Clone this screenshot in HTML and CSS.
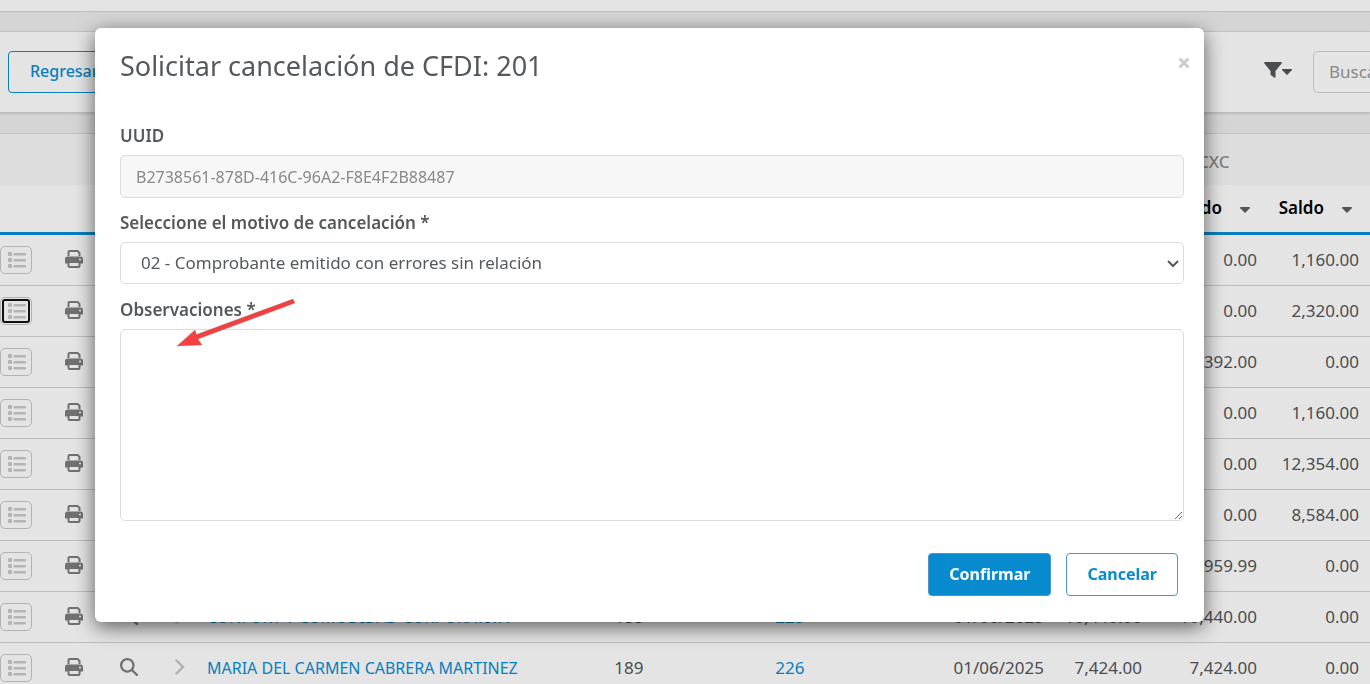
FILE: index.html
```html
<!DOCTYPE html>
<html lang="es">
<head>
<meta charset="utf-8">
<title>Solicitar cancelación de CFDI</title>
<link rel="stylesheet" href="styles.css">
</head>
<body>
<svg class="sprite" aria-hidden="true">
  <symbol id="i-list" viewBox="0 0 18 16"><g fill="currentColor"><rect width="4" height="4" y="0" rx="1"/><rect width="4" height="4" y="6" rx="1"/><rect width="4" height="4" y="12" rx="1"/><rect x="5.500" y="1" width="12.500" height="2.400" rx="1"/><rect x="5.500" y="7" width="12.500" height="2.400" rx="1"/><rect x="5.500" y="13" width="12.500" height="2.400" rx="1"/></g></symbol>
  <symbol id="i-print" viewBox="0 0 18 18"><path fill="currentColor" d="M4.500 0H13l2.500 2.500V6h-2V3.200L12.300 2H4.500v4h-2V2q0-2 2-2z"/><path fill="currentColor" fill-rule="evenodd" d="M2.500 6.500h13Q18 6.500 18 9v4.500h-2.500V16q0 2-2 2h-9q-2 0-2-2v-2.500H0V9q0-2.500 2.500-2.500zM4.500 13v3h9v-3zM15 8.500a1 1 0 1 0 0 2 1 1 0 1 0 0-2z"/></symbol>
  <symbol id="i-search" viewBox="0 0 512 512"><path fill="currentColor" d="M416 208c0 46-15 88-40 123l127 126c12 13 12 33 0 46s-33 12-46 0L331 376c-35 25-77 40-123 40C93 416 0 323 0 208S93 0 208 0s208 93 208 208zM208 352a144 144 0 1 0 0-288 144 144 0 1 0 0 288z"/></symbol>
  <symbol id="i-chev" viewBox="0 0 10 16"><path d="M1.500 1.500 8 8l-6.500 6.500" fill="none" stroke="currentColor" stroke-width="2.400" stroke-linecap="round"/></symbol>
  <symbol id="i-caret" viewBox="0 0 10 6"><path fill="currentColor" d="M.6 0h8.800q1 .4.3 1.200L5.600 5.600q-.6.500-1.200 0L.3 1.200Q-.4.400.6 0z"/></symbol>
</svg>

<div class="page">
  <header class="topbar"></header>
  <section class="toolbar">
    <button class="btn btn-back" type="button">Regresar</button>
    <div class="tools">
      <button class="filter" type="button" aria-label="Filtrar">
        <svg width="18" height="16" viewBox="0 0 18 16"><path fill="currentColor" d="M1 0h16q1.500.4.600 1.600L11.500 9v6q-.3 1.200-1.400.6L7 13.200q-.5-.4-.5-1V9L.4 1.600Q-.5.400 1 0z"/></svg>
        <svg width="10" height="6"><use href="#i-caret"/></svg>
      </button>
      <input class="search" type="text" placeholder="Buscar" aria-label="Buscar">
    </div>
  </section>
  <section class="grid">
    <table>
      <colgroup><col class="c-list"><col class="c-print"><col class="c-search"><col class="c-chev"><col class="c-name"><col class="c-num"><col class="c-folio"><col class="c-date"><col class="c-total"><col class="c-paid"><col class="c-saldo"></colgroup>
      <thead>
        <tr class="group"><th colspan="9"></th><th colspan="2">CXC</th></tr>
        <tr class="heads"><th colspan="9"></th><th>Pagado<svg width="10" height="6"><use href="#i-caret"/></svg></th><th>Saldo<svg width="10" height="6"><use href="#i-caret"/></svg></th></tr>
      </thead>
      <tbody id="rows"></tbody>
    </table>
  </section>
</div>

<div class="backdrop">
  <form class="modal" role="dialog" aria-labelledby="title">
    <header class="modal-head">
      <h1 id="title">Solicitar cancelación de CFDI: 201</h1>
      <button class="close" type="button" aria-label="Cerrar"><svg width="12" height="12" viewBox="0 0 12 12"><path d="M1.500 1.500l9 9m0-9l-9 9" stroke="currentColor" stroke-width="3"/></svg></button>
    </header>
    <label for="uuid">UUID</label>
    <input class="field" id="uuid" type="text" value="B2738561-878D-416C-96A2-F8E4F2B88487" disabled>
    <label for="motivo">Seleccione el motivo de cancelación *</label>
    <div class="select-wrap">
      <select class="field" id="motivo"><option>02 - Comprobante emitido con errores sin relación</option></select>
      <svg class="select-arrow" width="12" height="8" viewBox="0 0 12 8"><path d="M1 1l5 5 5-5" fill="none" stroke="currentColor" stroke-width="2"/></svg>
    </div>
    <label for="obs">Observaciones *</label>
    <textarea class="field" id="obs"></textarea>
    <footer class="actions">
      <button class="btn btn-primary" type="button">Confirmar</button>
      <button class="btn btn-cancel" type="button">Cancelar</button>
    </footer>
  </form>
</div>
<svg class="pointer" width="122" height="52" viewBox="0 0 122 52" aria-hidden="true"><path fill="#f44040" stroke="#8a7070" stroke-opacity=".5" stroke-width=".6" d="M118 0 120 4 23 40 27 46 2 47 20 31 21.500 35.500z"/></svg>
<script src="rows.js"></script>
</body>
</html>
```
FILE: styles.css
```css
* { box-sizing: border-box; }
body { margin: 0; height: 100vh; overflow: hidden; background: #d5d5d5; color: #4a4d50; font: 17px/24px "Noto Sans", sans-serif; }
button, input, select, textarea { font: inherit; color: inherit; }
.sprite { display: none; }
.topbar { height: 12px; background: #e4e4e4; border-bottom: 1px solid #bdbdbd; }
.toolbar { display: flex; justify-content: space-between; align-items: center; height: 82px; margin-top: 19px; padding-left: 8px; background: #e4e4e4; border-top: 1px solid #c3c3c3; border-bottom: 1px solid #bdbdbd; box-shadow: 0 1px 2px #bbb; }
.btn { height: 42px; padding: 0 20px 2px; border: 1px solid #077fbd; border-radius: 4px; background: transparent; color: #077fbd; }
.btn-back { padding-left: 21px; font-size: 16px; font-weight: 500; }
.tools { display: flex; align-items: center; gap: 21px; }
.filter { display: flex; align-items: center; padding: 0 0 5px; border: 0; background: none; color: #4a4d50; }
.filter svg + svg { margin-top: 4px; }
.search { width: 57px; height: 42px; padding: 0 0 2px 15px; border: 1px solid #bdbdbd; border-right: 0; border-radius: 5px 0 0 5px; background: transparent; }
.search::placeholder { color: #888; opacity: 1; }

.grid { margin-top: 20px; border-top: 1px solid #c3c3c3; }
table { width: 100%; table-layout: fixed; border-collapse: separate; border-spacing: 0; background: #e4e4e4; }
.c-list { width: 46px; } .c-print { width: 56px; } .c-search { width: 54px; } .c-chev { width: 48px; }
.c-num { width: 108px; } .c-folio { width: 214px; } .c-date { width: 155px; } .c-total { width: 98px; } .c-paid { width: 115px; } .c-saldo { width: 105px; }
th { padding: 0; white-space: nowrap; }
.group th { height: 51px; padding: 4px 0 0 48px; background: #ddd; color: #808080; text-align: left; font-weight: 500; }
.heads th { height: 50px; padding: 0 15px 2px 0; border-bottom: 3px solid #077fbd; color: #000; text-align: right; font-weight: 600; }
.heads svg { margin: 0 0 1px 18px; color: #555; }
.heads th:last-child { padding-right: 18px; }
td { height: 51px; padding: 0 8px 0 3px; border-bottom: 1px solid #bdbdbd; white-space: nowrap; }
td:last-child { padding-right: 11px; }
td a { color: #077fbd; text-decoration: none; }
td.icon { padding: 0 0 4px; color: #707070; text-align: center; }
td.icon:first-child { padding: 0; text-align: left; }
td svg { display: inline-block; vertical-align: middle; }
.row-menu { display: flex; align-items: center; justify-content: center; width: 32px; height: 28px; padding: 0 0 0 1px; border: 1px solid #b2b2b2; border-radius: 5px; background: none; color: #b4b4b4; }
.row-menu.focused { outline: 2px solid #111; outline-offset: -4px; }
td.chev { color: #b0b0b0; }
.name { font-size: 16px; }
.num { text-align: right; }
.mid { padding: 0; text-align: center; }

.backdrop { position: fixed; inset: 0; padding: 28px 166px 0 95px; }
.modal { display: flex; flex-direction: column; padding: 20px 20px 26px 25px; border-radius: 6px; background: #fff; color: #55595c; box-shadow: 0 5px 20px rgba(0, 0, 0, .6); }
.modal-head { display: flex; justify-content: space-between; align-items: flex-start; margin-bottom: 40px; }
h1 { margin: 0; font-size: 27px; line-height: 36px; font-weight: 400; }
.close { display: flex; justify-content: center; width: 20px; margin-top: 9px; margin-right: -10px; padding: 0; border: 0; background: none; color: #ccc; }
.modal label { margin-bottom: 7px; font-weight: 600; }
.field { display: block; width: 100%; height: 43px; padding: 0 15px; border: 1px solid #ddd; border-radius: 5px; background: #fff; }
.field:disabled { background: #f7f7f7; color: #888; }
#uuid { margin-bottom: 13px; font-size: 16px; }
.select-wrap { position: relative; margin-bottom: 14px; }
select.field { appearance: none; height: 42px; padding-left: 20px; }
.select-arrow { position: absolute; right: 5px; top: 18px; }
textarea.field { height: 192px; resize: vertical; }
.actions { display: flex; justify-content: flex-end; gap: 15px; margin-top: 32px; padding-right: 6px; }
.actions .btn { height: 43px; border-color: #4b94cd; color: #078ace; font-size: 16px; font-weight: 700; }
.actions .btn-primary { background: #078ace; color: #fff; }
.pointer { position: fixed; left: 175px; top: 299px; }
```
FILE: rows.js
```js
const rows = [
  ["", "", "", "", "", "0.00", "1,160.00"],
  ["", "", "", "", "", "0.00", "2,320.00"],
  ["", "", "", "", "", "392.00", "0.00"],
  ["", "", "", "", "", "0.00", "1,160.00"],
  ["", "", "", "", "", "0.00", "12,354.00"],
  ["", "", "", "", "", "0.00", "8,584.00"],
  ["", "", "", "", "", "959.99", "0.00"],
  ["CONFORT Y COMODIDAD CORPORATIVA", "188", "225", "01/06/2025", "10,440.00", "10,440.00", "0.00"],
  ["MARIA DEL CARMEN CABRERA MARTINEZ", "189", "226", "01/06/2025", "7,424.00", "7,424.00", "0.00"]
];
const icon = (id, w, h) => `<svg width="${w}" height="${h}"><use href="#i-${id}"/></svg>`;
document.getElementById("rows").innerHTML = rows.map((r, i) => `<tr>
  <td class="icon"><button type="button" aria-label="Opciones" class="row-menu${i === 1 ? " focused" : ""}">${icon("list", 18, 16)}</button></td>
  <td class="icon">${icon("print", 18, 18)}</td>
  <td class="icon">${icon("search", 18, 18)}</td>
  <td class="icon chev">${icon("chev", 10, 16)}</td>
  <td class="name"><a href="#">${r[0]}</a></td>
  <td class="mid">${r[1]}</td>
  <td class="mid"><a href="#">${r[2]}</a></td>
  ${r.slice(3).map(v => `<td class="num">${v}</td>`).join("")}
</tr>`).join("");
```
